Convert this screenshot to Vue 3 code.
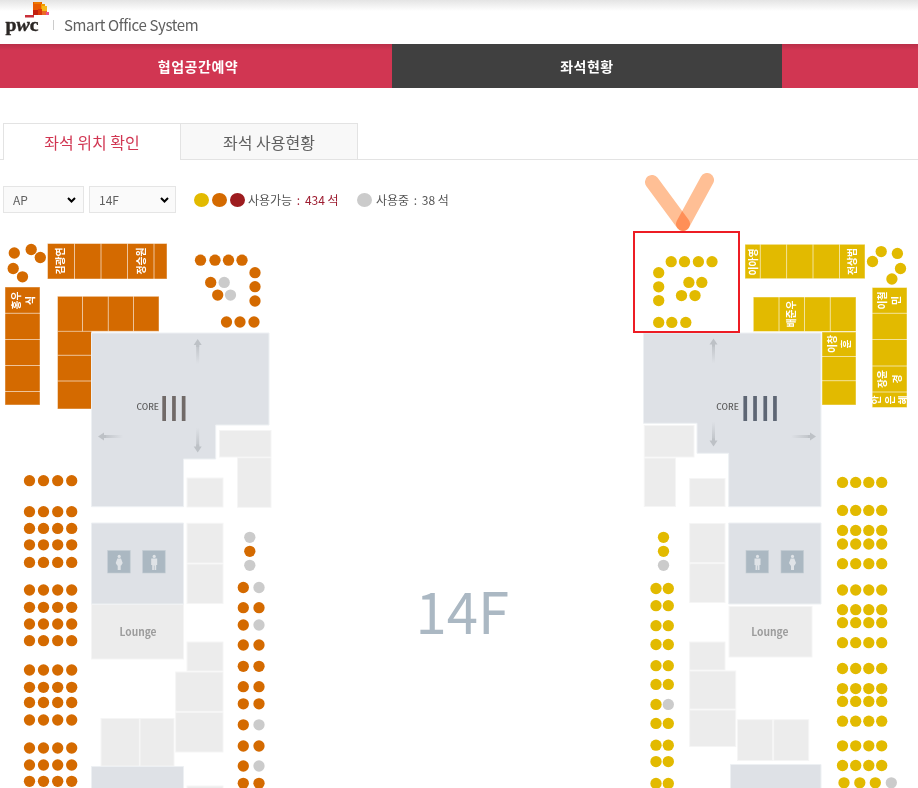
<script setup>
const orange = '#d46a00'
const yellow = '#e2ba00'
const busy = '#cbcbcb'

const row = (xs, y, fill, busyAt = []) =>
  xs.map((x, i) => ({ x, y, fill: busyAt.includes(i) ? busy : fill }))
const points = (list, fill) => list.map(([x, y, taken]) => ({ x, y, fill: taken ? busy : fill }))

const westCols = [29.5, 43.5, 57.7, 71.7]
const westRows = [480.7, 511.7, 528.4, 544.8, 562.4, 590, 607.3, 624, 640.7, 670, 687.3, 702.5, 720, 748, 765, 781.3]
const eastCols = [842.5, 855.7, 868.8, 881.7]
const eastRows = [482.4, 510.4, 530.4, 544, 563.7, 590, 609.7, 622.7, 642.7, 668.5, 688.6, 701.4, 721.2, 745.8, 765.5]
const westPairs = [[587.5, 1], [607.7], [625, 1], [645], [666.3], [686.7], [703.8], [724.8, 1], [746], [766, 1], [783.3]]
const eastPairs = [[588.5], [605.7], [625.7], [644.5], [665.7], [684.4], [704.4, 1], [723.4], [745.2], [761.6], [783.4]]

const seats = [
  ...westRows.flatMap((y) => row(westCols, y, orange)),
  ...eastRows.flatMap((y) => row(eastCols, y, yellow)),
  ...row([844, 859.8, 875.3, 891.3], 782.8, yellow, [3]),
  ...westPairs.flatMap(([y, b]) => row([243.3, 259], y, orange, b ? [1] : [])),
  ...eastPairs.flatMap(([y, b]) => row([656, 668.3], y, yellow, b ? [1] : [])),
  ...points([
    [249.8, 537.3, 1], [249.8, 551.3], [249.8, 565.3, 1],
    [14.3, 253], [31.2, 249.5], [40.3, 257.5], [13.2, 268.5], [22.5, 276.8],
    [200.5, 260.2], [215, 260.2], [228.5, 260.2], [242, 260.2],
    [255, 272.7], [255, 286.7], [255, 301],
    [210.7, 282.4], [224.2, 282.4, 1], [217.7, 295.1], [230.5, 295.1, 1],
    [226.5, 322], [240, 322], [254, 322]
  ], orange),
  ...points([
    [663.5, 537.3], [663.5, 551.3], [663.5, 565.3, 1],
    [671.2, 261.7], [684.5, 261.7], [698.4, 261.7], [712, 261.7],
    [658.7, 272.7], [658.7, 286.8], [658.7, 300.6],
    [688.9, 282.4], [701.8, 282.4], [681.5, 295.6], [695, 295.6],
    [658.7, 322.4], [671.8, 322.4], [685.8, 322.4],
    [881.2, 251.6], [897.4, 253.4], [872.5, 261.5], [900.5, 268.5], [891.9, 279]
  ], yellow)
]

// Each block: outer edges plus the positions of its dividers
const desks = [
  { x1: 47.5, y1: 243.5, x2: 167, y2: 279, v: [74.5, 101, 127.5, 154], h: [], fill: orange },
  { x1: 5, y1: 287, x2: 40, y2: 405, v: [], h: [313.3, 339.5, 365.5, 391.5], fill: orange },
  { x1: 57.5, y1: 331, x2: 91.5, y2: 409, v: [], h: [355.3, 381], fill: orange },
  { x1: 57.5, y1: 296.3, x2: 159, y2: 331.3, v: [82.5, 108.3, 133.5], h: [], fill: orange },
  { x1: 745, y1: 244.3, x2: 865, y2: 278.7, v: [760.3, 786.6, 813, 839.5], h: [], fill: yellow },
  { x1: 753.3, y1: 297, x2: 856, y2: 331.5, v: [779, 804.5, 830.3], h: [], fill: yellow },
  { x1: 822, y1: 332, x2: 856, y2: 405, v: [], h: [356.5, 380.7], fill: yellow },
  { x1: 872.2, y1: 287.5, x2: 907, y2: 407.5, v: [], h: [313.3, 339.5, 366, 392], fill: yellow }
]

const names = [
  { t: '김광연', x: 60.5, y: 261, l: 27 }, { t: '정승원', x: 141.5, y: 261, l: 27 },
  { t: '홍우', x: 16.5, y: 300.5, l: 18 }, { t: '식', x: 30.5, y: 300.5, l: 9 },
  { t: '이아영', x: 753.5, y: 262, l: 27 }, { t: '전상범', x: 852.5, y: 261.5, l: 27 },
  { t: '배준우', x: 791.5, y: 314, l: 27 },
  { t: '이창', x: 832.5, y: 344, l: 18 }, { t: '훈', x: 846.5, y: 344, l: 9 },
  { t: '이철', x: 882.5, y: 300.5, l: 18 }, { t: '민', x: 896.5, y: 300.5, l: 9 },
  { t: '장윤', x: 882.5, y: 379, l: 18 }, { t: '경', x: 897.5, y: 379, l: 9 },
  { t: '안', x: 876, y: 400, l: 9 }, { t: '은', x: 890, y: 400, l: 9 }, { t: '혜', x: 903, y: 400, l: 9 }
]

const rooms = [
  [219.5, 430.5, 271, 457], [237.5, 457.8, 271, 507.3], [187, 478, 223, 507], [187, 523.3, 223, 563],
  [187, 564, 223, 603.5], [187, 642, 223, 671], [175.7, 672, 223, 711.3], [175.7, 712.5, 223, 752],
  [101, 718.5, 139.3, 766], [140, 718.5, 174, 766], [187, 786, 223, 790], [91.5, 604.3, 183.5, 659],
  [644.3, 425.5, 694, 457], [644.3, 458, 675.5, 506.5], [689.7, 478.5, 725, 506.5], [689.7, 523.5, 725, 562.5],
  [689.7, 563.7, 725, 602.5], [729, 606.5, 812, 657], [689.7, 642, 725, 670], [689.7, 671, 735.7, 709],
  [689.7, 710, 735.7, 746.5], [737.5, 719.7, 772.5, 760.5], [773.7, 719.7, 808.7, 760.5]
]
const halls = [
  '91.5,333 269,333 269,425 215.7,425 215.7,459 183.5,459 183.5,506.7 91.5,506.7',
  '91.5,523 183.5,523 183.5,604 91.5,604',
  '91.5,766.5 183.5,766.5 183.5,790 91.5,790',
  '643.5,333 821,333 821,506.7 728.7,506.7 728.7,453.3 697,453.3 697,423.3 643.5,423.3',
  '728.7,523 821,523 821,604 728.7,604',
  '730.5,764.5 821,764.5 821,790 730.5,790'
]
const arrows = [
  [197.7, 339, 0], [197.7, 452.5, 180], [98, 436.5, -90],
  [713.5, 338.5, 0], [713.5, 446.5, 180], [816, 436.5, 90]
]
const bars = [162.3, 172.1, 181.8, 743.4, 753.2, 763.4, 773.1]
const toilets = [[107.7, 'f'], [142.7, 'm'], [746, 'm'], [781, 'f']]
</script>

<template>
  <div class="page">
    <header class="header">
      <svg class="logo" width="50" height="36" viewBox="0 0 50 36">
        <rect x="25" y="15" width="9" height="2.500" fill="#c9303a" />
        <path d="M33 2h9v13h-9z" fill="#e85a00" />
        <path d="M34 2h7v2h-7z" fill="#ee7a00" />
        <path d="M41 4h4v8h-4z" fill="#f29a00" />
        <path d="M42 6h5v6h-5z" fill="#f6b81c" />
        <path d="M33 10h5v5h-5z" fill="#c2200f" />
        <path d="M38 9h4v6h-4z" fill="#dc3a0a" />
        <path d="M42 11h5v4h-5z" fill="#ea6a25" />
        <path d="M46 12h3v3h-3z" fill="#ec4f8a" />
        <text x="5.500" y="30.500" textLength="33" lengthAdjust="spacingAndGlyphs" class="wordmark">p<tspan font-style="italic">w</tspan>c</text>
      </svg>
      <span class="rule"></span>
      <span class="system">Smart Office System</span>
    </header>

    <nav class="nav">
      <a class="nav-item">협업공간예약</a>
      <a class="nav-item current">좌석현황</a>
      <a class="nav-item"></a>
    </nav>

    <div class="tabs">
      <div class="tab active">좌석 위치 확인</div>
      <div class="tab">좌석 사용현황</div>
    </div>

    <div class="filters">
      <div class="select ap">AP<svg width="9" height="6" viewBox="0 0 9 6"><path d="M1 1l3.500 3.500L8 1" /></svg></div>
      <div class="select floor">14F<svg width="9" height="6" viewBox="0 0 9 6"><path d="M1 1l3.500 3.500L8 1" /></svg></div>
      <div class="legend">
        <i class="dot y"></i><i class="dot o"></i><i class="dot r"></i>
        <span class="free">사용가능 <b><i class="colon">:</i> 434 석</b></span>
        <i class="dot g"></i>
        <span class="used">사용중 <i class="colon">:</i> 38 석</span>
      </div>
    </div>

    <svg class="map" width="918" height="623" viewBox="0 165 918 623">
      <defs>
        <linearGradient id="fade" x1="0" y1="0" x2="0" y2="1">
          <stop offset="0" stop-color="#bcc0c5" />
          <stop offset="1" stop-color="#bcc0c5" stop-opacity="0" />
        </linearGradient>
      </defs>

      <g v-for="(d, i) in desks" :key="'d' + i">
        <rect :x="d.x1" :y="d.y1" :width="d.x2 - d.x1" :height="d.y2 - d.y1" :fill="d.fill" stroke="#fff" stroke-opacity=".45" />
        <line v-for="x in d.v" :key="x" :x1="x" :x2="x" :y1="d.y1" :y2="d.y2" class="divider" />
        <line v-for="y in d.h" :key="y" :x1="d.x1" :x2="d.x2" :y1="y" :y2="y" class="divider" />
      </g>
      <text v-for="(n, i) in names" :key="'n' + i" class="name" :textLength="n.l" lengthAdjust="spacingAndGlyphs" :transform="`translate(${n.x + 3.9} ${n.y}) rotate(-90)`">{{ n.t }}</text>

      <rect v-for="(r, i) in rooms" :key="'r' + i" :x="r[0]" :y="r[1]" :width="r[2] - r[0]" :height="r[3] - r[1]" class="room" />
      <polygon v-for="p in halls" :key="p" :points="p" class="hall" />

      <g v-for="(a, i) in arrows" :key="'a' + i" :transform="`translate(${a[0]} ${a[1]}) rotate(${a[2]})`">
        <rect x="-1.500" y="4" width="3" height="21" fill="url(#fade)" />
        <path d="M0 0L4 6H1.500V8H-1.500V6H-4Z" fill="#bdc1c6" />
      </g>

      <rect v-for="x in bars" :key="x" :x="x" y="396" width="3.700" height="25" :fill="x < 400 ? '#716a68' : '#5e6674'" />
      <text x="136.500" y="409.800" textLength="22.500" lengthAdjust="spacingAndGlyphs" class="core">CORE</text>
      <text x="716.300" y="409.800" textLength="22.500" lengthAdjust="spacingAndGlyphs" class="core">CORE</text>

      <g v-for="t in toilets" :key="t[0]" :transform="`translate(${t[0]} 550.500)`">
        <rect width="22.500" height="22.500" fill="#abb8c2" stroke="#c2cbd2" stroke-width=".6" />
        <circle cx="11.500" cy="5.900" r="1.600" fill="#dfe3e7" />
        <path v-if="t[1] === 'm'" d="M8.500 8h6v6.500h-1v5h-1.700V15h-.6v4.500H9.500v-5h-1z" fill="#dfe3e7" />
        <path v-else d="M9.700 8h3.600l1.700 4.500-1.500 2.500h-.5v4.500h-3V15h-.5L8 12.500z" fill="#dfe3e7" />
      </g>

      <text x="119.500" y="636.200" textLength="37" lengthAdjust="spacingAndGlyphs" class="lounge">Lounge</text>
      <text x="751.200" y="636.200" textLength="37.300" lengthAdjust="spacingAndGlyphs" class="lounge">Lounge</text>
      <text x="415.500" y="633.800" textLength="93.500" lengthAdjust="spacingAndGlyphs" class="floor-label">14F</text>

      <circle v-for="(s, i) in seats" :key="'s' + i" :cx="s.x" :cy="s.y" r="5.650" :fill="s.fill" />

      <rect x="634" y="232" width="105" height="100" fill="none" stroke="#ed1c24" stroke-width="2" />
      <g class="marker">
        <line x1="652" y1="182" x2="683" y2="224" />
        <line x1="707" y1="180" x2="683" y2="224" />
      </g>
    </svg>
  </div>
</template>

<style>
body {
  margin: 0;
  background: #fff;
}
</style>

<style scoped>
.page {
  width: 918px;
  height: 788px;
  overflow: hidden;
  background: #fff;
  color: #555;
  font-family: "Noto Sans CJK KR", "Noto Sans", sans-serif;
}
.header {
  display: flex;
  height: 44px;
  background: linear-gradient(#e4e4e4, #fff 11px);
}
.logo {
  flex: none;
}
.wordmark {
  font: bold 19px "Liberation Serif", serif;
  fill: #2b2725;
  stroke: #2b2725;
  stroke-width: 0.4;
}
.rule {
  width: 1px;
  height: 10px;
  margin: 20px 10px 0 3px;
  background: #ccc;
}
.system {
  padding-top: 14px;
  font-size: 15px;
  line-height: 22px;
  letter-spacing: -0.36px;
  color: #606060;
}
.nav {
  display: grid;
  grid-template-columns: 392px 390px 1fr;
  height: 44px;
}
.nav-item {
  background: linear-gradient(#b92f48, #d13652 6px);
  color: #fff;
  font-size: 14px;
  font-weight: 700;
  letter-spacing: 0.5px;
  line-height: 44px;
  text-align: center;
  padding-left: 4px;
}
.nav-item.current {
  padding: 0;
  background: #404040;
}
.tabs {
  display: flex;
  height: 37px;
  margin-top: 35px;
  padding-left: 3px;
  box-shadow: inset 0 -1px #e3e3e3;
}
.tab {
  box-sizing: border-box;
  width: 177px;
  border: 1px solid #e3e3e3;
  border-left: 0;
  background: #f8f8f8;
  color: #606060;
  font-size: 16px;
  line-height: 37px;
  text-align: center;
}
.tab.active {
  width: 178px;
  border-left: 1px solid #e3e3e3;
  border-bottom: 0;
  background: #fff;
  color: #d13652;
}
.filters {
  display: flex;
  height: 27px;
  margin-top: 26px;
  padding-left: 3px;
  gap: 5px;
}
.select {
  box-sizing: border-box;
  display: flex;
  align-items: center;
  justify-content: space-between;
  padding: 0 7px 0 9px;
  border: 1px solid #e5e5e5;
  background: #fafafa;
  font-size: 12px;
  color: #606060;
}
.select svg {
  fill: none;
  stroke: #000;
  stroke-width: 2;
}
.ap {
  width: 81px;
}
.floor {
  width: 87px;
  padding-right: 6px;
}
.legend {
  display: flex;
  align-items: center;
  margin-left: 13px;
  font-size: 12px;
  white-space: pre;
}
.dot {
  width: 15px;
  height: 14px;
  margin-right: 3px;
  border-radius: 50%;
}
.y {
  background: #e2ba00;
}
.o {
  background: #d46a00;
}
.r {
  background: #9d1c1f;
}
.g {
  background: #cbcbcb;
  margin-right: 4px;
}
.free {
  width: 109px;
}
.free b {
  font-weight: 400;
  color: #9d1c30;
}
.colon {
  font-style: normal;
  margin: 0 2px;
}
.map {
  display: block;
  margin-top: -48px;
}
.divider {
  stroke: #fff;
  stroke-opacity: 0.6;
}
.name {
  font-size: 10.5px;
  font-weight: 700;
  fill: #fff;
  text-anchor: middle;
}
.room {
  fill: #ececec;
  stroke: #f5f5f5;
}
.hall {
  fill: #dee1e6;
  stroke: #edf0f3;
}
.core {
  font-size: 8.5px;
  font-weight: 500;
  fill: #5c5c5c;
}
.lounge {
  font-size: 11px;
  font-weight: 700;
  fill: #9c9c9c;
}
.floor-label {
  font-size: 57.5px;
  fill: #abb8c3;
}
.marker line {
  stroke: #ffbf95;
  stroke-width: 14;
  stroke-linecap: round;
  mix-blend-mode: multiply;
}
</style>
